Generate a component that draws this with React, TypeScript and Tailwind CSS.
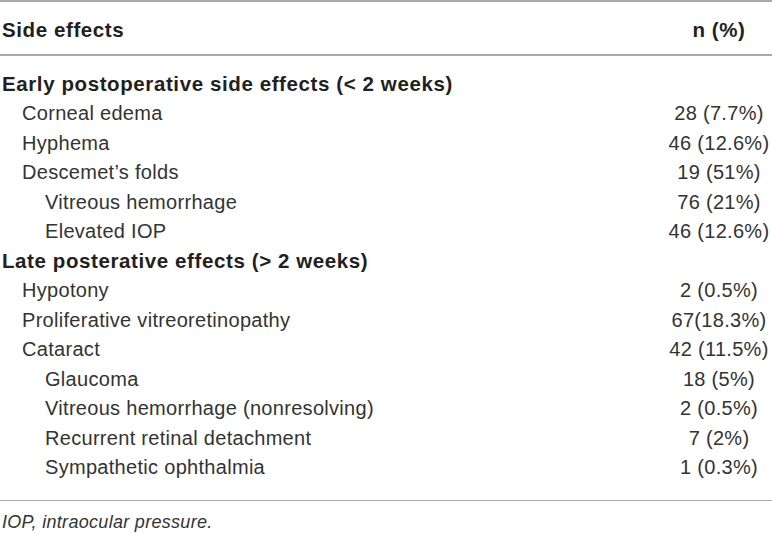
import React from 'react';

type Row = { label: string; value?: string; level: 0 | 1 | 2 };

const rows: Row[] = [
  { label: 'Early postoperative side effects (< 2 weeks)', level: 0 },
  { label: 'Corneal edema', value: '28 (7.7%)', level: 1 },
  { label: 'Hyphema', value: '46 (12.6%)', level: 1 },
  { label: 'Descemet’s folds', value: '19 (51%)', level: 1 },
  { label: 'Vitreous hemorrhage', value: '76 (21%)', level: 2 },
  { label: 'Elevated IOP', value: '46 (12.6%)', level: 2 },
  { label: 'Late posterative effects (> 2 weeks)', level: 0 },
  { label: 'Hypotony', value: '2 (0.5%)', level: 1 },
  { label: 'Proliferative vitreoretinopathy', value: '67(18.3%)', level: 1 },
  { label: 'Cataract', value: '42 (11.5%)', level: 1 },
  { label: 'Glaucoma', value: '18 (5%)', level: 2 },
  { label: 'Vitreous hemorrhage (nonresolving)', value: '2 (0.5%)', level: 2 },
  { label: 'Recurrent retinal detachment', value: '7 (2%)', level: 2 },
  { label: 'Sympathetic ophthalmia', value: '1 (0.3%)', level: 2 },
];

const indent = ['pl-[2px]', 'pl-[22px]', 'pl-[45px]'];

export default function App() {
  return (
    <div className="w-[772px] h-[534px] bg-white text-[#231f20] font-['Liberation_Sans',Arial,sans-serif] text-[20px] tracking-[0.3px]">
      <div className="border-t-2 border-[#a7a9ac]" />
      {/* Header */}
      <div className="flex h-[54px] items-center border-b-2 border-[#a7a9ac] pt-[4px]">
        <div className="flex-1 pl-[2px] font-bold text-[20.5px] tracking-[0.6px]">Side effects</div>
        <div className="w-[106px] text-center font-bold text-[20.5px] tracking-[0.6px] whitespace-nowrap">n (%)</div>
      </div>
      <div className="pt-[13px]">
        {rows.map((r, i) => (
          <div key={i} className="flex h-[29.5px] items-center leading-none">
            <div
              className={`flex-1 whitespace-nowrap ${indent[r.level]} ${
                r.level === 0 ? 'font-bold text-[20.5px] tracking-[0.6px]' : 'text-[#333]'
              }`}
            >
              {r.label}
            </div>
            <div className="w-[106px] text-center text-[#333] whitespace-nowrap">{r.value}</div>
          </div>
        ))}
      </div>
      <div className="mt-[18px] border-t border-[#a7a9ac]" />
      <div className="pl-[2px] pt-[12px] text-[18px] tracking-[0.3px] italic text-[#333] leading-none">
        IOP, intraocular pressure.
      </div>
    </div>
  );
}
